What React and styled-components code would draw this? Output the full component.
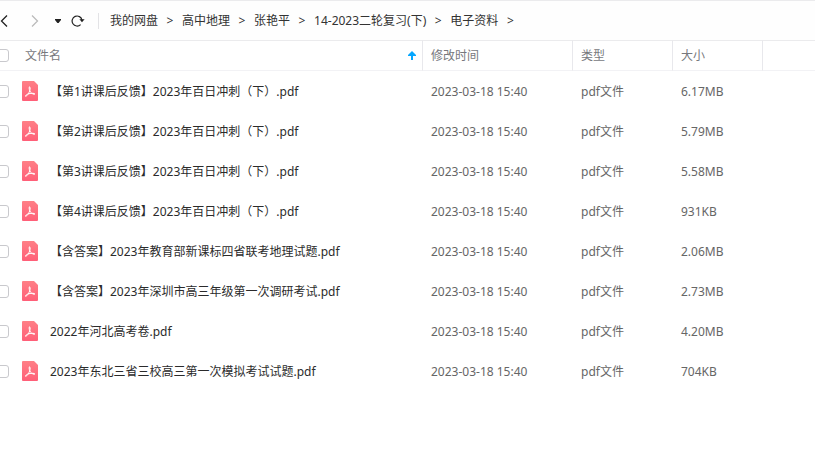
import React, { useState } from "react";
import styled, { createGlobalStyle } from "styled-components";

const GlobalStyle = createGlobalStyle`
    body {
        margin: 0;
        background-color: white;
        overflow-x: hidden;
    }
    * {
        box-sizing: border-box;
    }
`;

const Page = styled.div`
    min-height: 100vh;
    border-top: 1px solid #ebebed;
    overflow: hidden;
    color: #333;
    font-family: "Noto Sans", "Noto Sans CJK SC", sans-serif;
    font-size: 12px;
    line-height: 18px;
`;

const Toolbar = styled.div`
    display: flex;
    align-items: center;
    height: 39px;
    background-color: #fefefe;
`;

const IconButton = styled.button`
    display: flex;
    align-items: center;
    justify-content: center;
    width: ${(props) => props.$width || 24}px;
    height: 20px;
    padding: 0;
    border: none;
    background: none;
    color: #222;
    cursor: pointer;

    &:disabled {
        color: #bbb;
        cursor: default;
    }
`;

const NavButtons = styled.div`
    display: flex;
    align-items: center;
    gap: 4px;
    margin-left: -8px;
`;

const Divider = styled.span`
    width: 1px;
    height: 16px;
    margin: 0 11px 0 8px;
    background-color: #e3e3e6;
`;

const Breadcrumb = styled.nav`
    display: flex;
    align-items: center;
    white-space: nowrap;
`;

const Crumb = styled.a`
    color: #333;
    text-decoration: none;
`;

const Separator = styled.span`
    display: flex;
    justify-content: center;
    width: 24px;
    color: #333;
`;

const Table = styled.table`
    width: 100%;
    table-layout: fixed;
    border-collapse: separate;
    border-spacing: 0;
`;

const Col = styled.col`
    width: ${(props) => (props.$width ? props.$width + "px" : "auto")};
`;

const HeadCell = styled.th`
    height: 31px;
    padding: 0 8px;
    border-top: 1px solid #ebebed;
    border-bottom: 1px solid #f2f2f5;
    border-right: ${(props) => (props.$divided ? "1px solid #e8e8ec" : "none")};
    color: #77787d;
    font-weight: normal;
    text-align: left;
`;

const SortLabel = styled.div`
    display: flex;
    align-items: center;
    justify-content: space-between;
    margin-right: -2px;
`;

const Cell = styled.td`
    height: 40px;
    padding: 2px 8px 0;
    color: #666;
    white-space: nowrap;
`;

const PlainCell = styled(Cell)`
    padding: 0 8px;
`;

const CheckCell = styled(Cell)`
    padding: 0;
`;

const CheckHead = styled(HeadCell)`
    padding: 0;
`;

const Checkbox = styled.input`
    display: block;
    appearance: none;
    width: 13px;
    height: 13px;
    margin: 0 0 0 -4px;
    border: 1px solid #c9c9cd;
    border-radius: 3px;
    background-color: white;

    &:checked {
        border-color: #06a7ff;
        background-color: #06a7ff;
    }
`;

const FileName = styled.label`
    display: flex;
    align-items: center;
    gap: 12px;
    margin-left: -3px;
    color: #2b2b2b;
`;

const FileText = styled.span`
    padding-top: 2px;
`;

const crumbs = ["我的网盘", "高中地理", "张艳平", "14-2023二轮复习(下)", "电子资料"];

const files = [
    { name: "【第1讲课后反馈】2023年百日冲刺（下）.pdf", size: "6.17MB" },
    { name: "【第2讲课后反馈】2023年百日冲刺（下）.pdf", size: "5.79MB" },
    { name: "【第3讲课后反馈】2023年百日冲刺（下）.pdf", size: "5.58MB" },
    { name: "【第4讲课后反馈】2023年百日冲刺（下）.pdf", size: "931KB" },
    { name: "【含答案】2023年教育部新课标四省联考地理试题.pdf", size: "2.06MB" },
    { name: "【含答案】2023年深圳市高三年级第一次调研考试.pdf", size: "2.73MB" },
    { name: "2022年河北高考卷.pdf", size: "4.20MB" },
    { name: "2023年东北三省三校高三第一次模拟考试试题.pdf", size: "704KB" },
];

const Chevron = ({ back }) => (
    <svg width="8" height="12" viewBox="0 0 8 12" fill="none" stroke="currentColor" strokeWidth="1.3">
        <path d={back ? "M7 0.5L1.5 6L7 11.5" : "M1 0.5L6.5 6L1 11.5"} />
    </svg>
);

const Caret = () => (
    <svg width="6" height="4" viewBox="0 0 6 4" fill="currentColor">
        <path d="M0 0H6V1L3.6 4H2.4L0 1Z" />
    </svg>
);

const Refresh = () => (
    <svg width="14" height="12" viewBox="0 0 14 12">
        <path d="M9.6 9.6A5 5 0 1 1 11 5" fill="none" stroke="currentColor" strokeWidth="1.2" />
        <path d="M8.4 4.2H13.6L11 7.2Z" fill="currentColor" />
    </svg>
);

const SortArrow = () => (
    <svg width="8" height="9" viewBox="0 0 8 9" fill="#06a7ff">
        <path d="M4 0L8 4V5H5V9H3V5H0V4Z" />
    </svg>
);

const PdfIcon = () => (
    <svg width="16" height="20" viewBox="0 0 16 20">
        <defs>
            <linearGradient id="pdf" x1="0" y1="0" x2="0" y2="1">
                <stop offset="0" stopColor="#ff7f86" />
                <stop offset="1" stopColor="#ff5f78" />
            </linearGradient>
        </defs>
        <path d="M1 0H12L16 4V19A1 1 0 0 1 15 20H1A1 1 0 0 1 0 19V1A1 1 0 0 1 1 0Z" fill="url(#pdf)" />
        <path
            d="M7.4 5.8C8.4 6 8.4 8 7.8 9.6C7 12 5 15.2 3.6 15.4C2.9 14.8 4.6 13.2 7 12.7C9.6 12.1 12.6 12.1 12.9 13C12.2 13.8 9.6 12.6 8.4 11C7.4 9.6 6.8 7 7.4 5.8Z"
            fill="none"
            stroke="white"
            strokeWidth="1"
        />
    </svg>
);

const App = () => {
    const [selected, setSelected] = useState([]);

    const toggle = (name) => {
        setSelected(
            selected.includes(name) ? selected.filter((item) => item !== name) : [...selected, name]
        );
    };

    const toggleAll = () => {
        setSelected(selected.length === files.length ? [] : files.map((file) => file.name));
    };

    return (
        <Page>
            <GlobalStyle />
            <Toolbar>
                <NavButtons>
                    <IconButton aria-label="后退"><Chevron back /></IconButton>
                    <IconButton $width={30} aria-label="前进" disabled><Chevron /></IconButton>
                    <IconButton $width={8} aria-label="历史"><Caret /></IconButton>
                    <IconButton aria-label="刷新"><Refresh /></IconButton>
                </NavButtons>
                <Divider />
                <Breadcrumb>
                    {crumbs.map((crumb) => (
                        <React.Fragment key={crumb}>
                            <Crumb href="#">{crumb}</Crumb>
                            <Separator>&gt;</Separator>
                        </React.Fragment>
                    ))}
                </Breadcrumb>
            </Toolbar>
            <Table>
                <colgroup>
                    <Col $width={17} />
                    <Col $width={406} />
                    <Col $width={150} />
                    <Col $width={100} />
                    <Col $width={90} />
                    <Col />
                </colgroup>
                <thead>
                    <tr>
                        <CheckHead>
                            <Checkbox
                                type="checkbox"
                                aria-label="全选"
                                checked={selected.length === files.length}
                                onChange={toggleAll}
                            />
                        </CheckHead>
                        <HeadCell $divided>
                            <SortLabel>文件名<SortArrow /></SortLabel>
                        </HeadCell>
                        <HeadCell $divided>修改时间</HeadCell>
                        <HeadCell $divided>类型</HeadCell>
                        <HeadCell $divided>大小</HeadCell>
                        <HeadCell />
                    </tr>
                </thead>
                <tbody>
                    {files.map((file, index) => (
                        <tr key={file.name}>
                            <CheckCell>
                                <Checkbox
                                    type="checkbox"
                                    id={`file-${index}`}
                                    checked={selected.includes(file.name)}
                                    onChange={() => toggle(file.name)}
                                />
                            </CheckCell>
                            <PlainCell>
                                <FileName htmlFor={`file-${index}`}>
                                    <PdfIcon />
                                    <FileText>{file.name}</FileText>
                                </FileName>
                            </PlainCell>
                            <Cell>2023-03-18 15:40</Cell>
                            <Cell>pdf文件</Cell>
                            <Cell>{file.size}</Cell>
                        </tr>
                    ))}
                </tbody>
            </Table>
        </Page>
    );
};

export default App;
